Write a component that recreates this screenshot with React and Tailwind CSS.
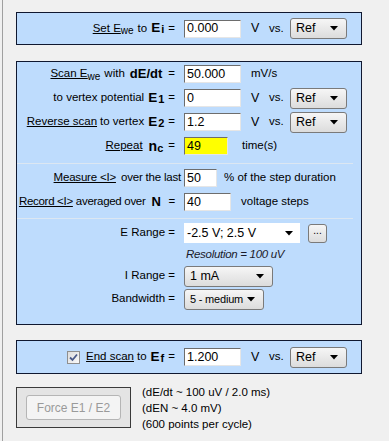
import React from 'react';

function Arrow() {
  return (
    <svg width="8" height="5" viewBox="0 0 8 5" className="shrink-0">
      <path d="M0 0 H8 L4 4.5 Z" fill="#000" />
    </svg>
  );
}

function Edit({ value, w, yellow }) {
  return (
    <div
      className={`h-[18px] ${w} flex items-center pl-[2px] border border-t-[#6d6d6d] border-l-[#6d6d6d] border-r-[#e6e6e6] border-b-[#e6e6e6] text-[12.5px] leading-none ${yellow ? 'bg-[#ffff00]' : 'bg-white'}`}
    >
      {value}
    </div>
  );
}

function Combo({ value, w, tight }) {
  return (
    <div
      className={`h-[21px] ${w} flex items-center justify-between pl-[5px] pr-[8px] rounded-[3px] border border-[#7a7a7a] bg-gradient-to-b from-[#f6f6f6] to-[#dcdcdc] text-[12.5px] leading-none whitespace-nowrap`}
    >
      <span className={tight ? 'text-[11px] tracking-[-0.2px]' : ''}>{value}</span>
      <Arrow />
    </div>
  );
}

function VsRef() {
  return (
    <div className="flex items-center">
      <span className="w-[18px] ml-[10px] text-[12.5px]">V</span>
      <span className="w-[21px] text-[11.5px]">vs.</span>
      <Combo value="Ref" w="w-[57px]" />
    </div>
  );
}

function BoldE({ sub }) {
  return (
    <span className="font-bold text-[13.5px] ml-[4px] mr-[4px]">
      E<sub className="text-[11px] font-bold relative top-[1px] ml-[1px]">{sub}</sub>
    </span>
  );
}

function Row({ label, h = 'h-[24px]', children }) {
  return (
    <div className={`flex items-center ${h}`}>
      <div className="w-[159px] flex justify-end items-center whitespace-nowrap pr-[1px]">{label}</div>
      <div className="ml-[8px] flex items-center">{children}</div>
    </div>
  );
}

export default function App() {
  return (
    <div className="w-[389px] h-[441px] bg-[#f0f0f0] flex text-black text-[11.5px] font-['Liberation_Sans',Arial,sans-serif] overflow-hidden">
      <div className="w-[2px]" />
      <div className="w-px bg-[#a0a0a0]" />
      <div className="pl-[13px] pt-[12px] flex flex-col">
        {/* Initial potential */}
        <div className="w-[346px] h-[33px] bg-[#bedcfd] border border-[#101830] flex items-center">
          <Row label={<>
            <span className="underline">Set E<sub className="text-[10px]">we</sub></span>
            <span className="ml-[4px]">to</span>
            <BoldE sub="i" />
            <span>=</span>
          </>}>
            <Edit value="0.000" w="w-[57px]" />
            <VsRef />
          </Row>
        </div>

        {/* Scan parameters */}
        <div className="mt-[16px] w-[346px] h-[264px] bg-[#bedcfd] border border-[#101830] flex flex-col">
          <Row label={<>
            <span className="underline">Scan E<sub className="text-[10px]">we</sub></span>
            <span className="ml-[4px]">with</span>
            <span className="font-bold text-[13px] ml-[5px] mr-[6px]">dE/dt</span>
            <span>=</span>
          </>}>
            <Edit value="50.000" w="w-[57px]" />
            <span className="ml-[10px] text-[11.5px]">mV/s</span>
          </Row>
          <Row label={<>
            <span>to vertex potential</span>
            <BoldE sub="1" />
            <span>=</span>
          </>}>
            <Edit value="0" w="w-[57px]" />
            <VsRef />
          </Row>
          <Row label={<>
            <span className="underline">Reverse scan</span>
            <span className="ml-[3px]">to vertex</span>
            <BoldE sub="2" />
            <span>=</span>
          </>}>
            <Edit value="1.2" w="w-[57px]" />
            <VsRef />
          </Row>
          <Row label={<>
            <span className="underline">Repeat</span>
            <span className="font-bold text-[14px] ml-[6px] mr-[5px]">n<sub className="text-[11px] font-bold relative top-[1px]">c</sub></span>
            <span>=</span>
          </>}>
            <Edit value="49" w="w-[44px]" yellow />
            <span className="ml-[14px]">time(s)</span>
          </Row>

          <div className="mt-[5px] mr-[8px] h-px bg-[#a9c4de] border-b border-white/60" />

          <div className="mt-[2px]">
            <Row label={<span className="flex items-center tracking-[-0.2px] -mr-[6px]">
              <span className="underline">Measure &lt;I&gt;</span>
              <span className="ml-[5px]">over the last</span>
            </span>}>
              <Edit value="50" w="w-[33px]" />
              <span className="ml-[7px]">% of the step duration</span>
            </Row>
            <Row label={<span className="flex items-center tracking-[-0.3px]">
              <span className="underline">Record &lt;I&gt;</span>
              <span className="ml-[3px]">averaged over</span>
              <span className="font-bold text-[13px] ml-[6px] mr-[8px]">N</span>
              <span>=</span>
            </span>}>
              <Edit value="40" w="w-[47px]" />
              <span className="ml-[10px]">voltage steps</span>
            </Row>
          </div>

          <div className="mt-[4px] mr-[8px] h-px bg-[#a9c4de] border-b border-white/60" />

          <div className="mt-[2px]">
            <Row label={<span>E Range =</span>}>
              <div className="h-[20px] w-[116px] bg-white flex items-center justify-between pl-[3px] pr-[7px] text-[12.5px]">
                <span>-2.5 V; 2.5 V</span>
                <Arrow />
              </div>
              <div className="ml-[8px] w-[19px] h-[19px] rounded-[3px] border border-[#7a7a7a] bg-gradient-to-b from-[#f6f6f6] to-[#dcdcdc] flex items-center justify-center text-[10px] leading-none pb-[4px]">...</div>
            </Row>
            <Row h="h-[20px]" label={null}>
              <span className="italic text-[11.5px] ml-[2px] text-[#1a1a2a] tracking-[-0.3px]">Resolution = 100 uV</span>
            </Row>
            <Row h="h-[22px]" label={<span>I Range =</span>}>
              <Combo value="1 mA" w="w-[89px]" />
            </Row>
            <Row label={<span>Bandwidth =</span>}>
              <Combo value="5 - medium" w="w-[80px]" tight />
            </Row>
          </div>
        </div>

        {/* End scan */}
        <div className="mt-[15px] w-[346px] h-[34px] bg-[#bedcfd] border border-[#101830] flex items-center">
          <Row label={<>
            <span className="w-[13px] h-[13px] border border-[#8f8f8f] bg-gradient-to-br from-[#dcdcdc] to-[#fafafa] flex items-center justify-center mr-[6px]">
              <svg width="9" height="9" viewBox="0 0 9 9">
                <path d="M1 4.5 L3.5 7 L8 1.5" stroke="#4a5a8a" strokeWidth="1.8" fill="none" />
              </svg>
            </span>
            <span className="underline">End scan</span>
            <span className="ml-[3px]">to</span>
            <BoldE sub="f" />
            <span>=</span>
          </>}>
            <Edit value="1.200" w="w-[57px]" />
            <VsRef />
          </Row>
        </div>

        {/* Force + info */}
        <div className="mt-[13px] flex items-start">
          <div className="w-[115px] h-[41px] bg-[#e4e4e4] border border-[#3a3a3a] flex items-center justify-center">
            <div className="w-[95px] h-[25px] rounded-[3px] border border-[#b5b5b5] bg-[#f4f4f4] flex items-center justify-center text-[#9a9a9a] text-[12px]">
              Force E1 / E2
            </div>
          </div>
          <div className="ml-[11px] -mt-[3px] flex flex-col leading-[16px] text-[11.5px]">
            <span>(dE/dt ~ 100 uV / 2.0 ms)</span>
            <span>(dEN ~ 4.0 mV)</span>
            <span>(600 points per cycle)</span>
          </div>
        </div>
      </div>
    </div>
  );
}
